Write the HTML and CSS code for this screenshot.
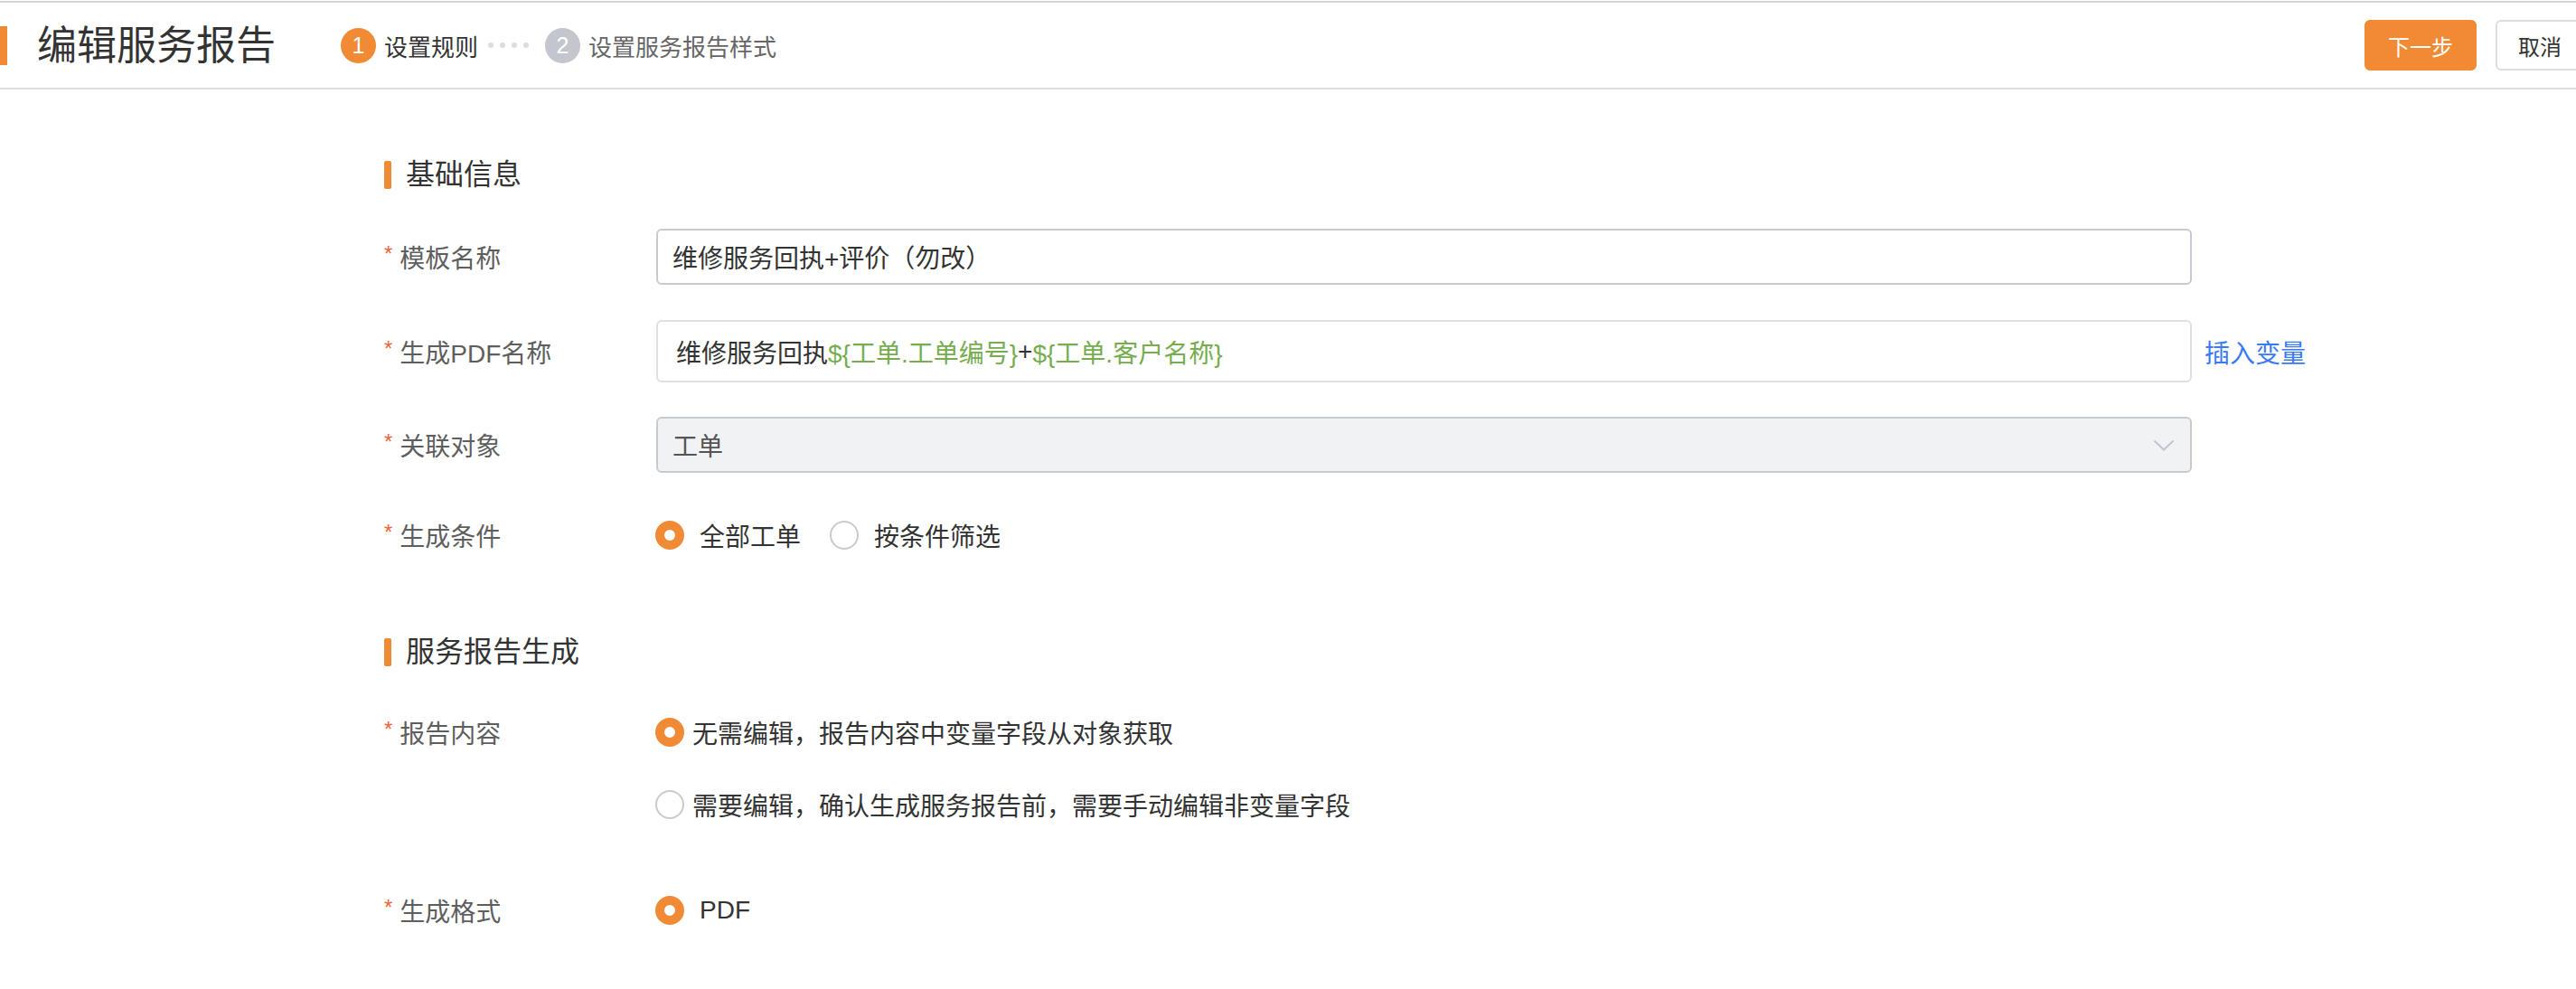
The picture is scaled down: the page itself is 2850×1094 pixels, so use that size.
FILE: index.html
```html
<!DOCTYPE html>
<html lang="zh-CN">
<head>
    <meta charset="UTF-8">
    <meta name="viewport" content="width=device-width, initial-scale=1.0">
    <title>编辑服务报告</title>
    <link rel="stylesheet" href="styles.css">
</head>
<body>
    <header class="topbar">
        <div class="topbar-left">
            <h1 class="page-title">编辑服务报告</h1>
            <ol class="steps">
                <li class="step active"><span class="step-num">1</span><span class="step-text">设置规则</span></li>
                <li class="step-dots"><i></i><i></i><i></i><i></i></li>
                <li class="step"><span class="step-num">2</span><span class="step-text">设置服务报告样式</span></li>
            </ol>
        </div>
        <div class="topbar-actions">
            <button class="btn btn-primary">下一步</button>
            <button class="btn btn-cancel">取消</button>
        </div>
    </header>

    <main class="form">
        <h2 class="section-title">基础信息</h2>

        <div class="form-item">
            <label class="form-label"><span class="required">*</span>模板名称</label>
            <div class="form-control">
                <input class="input" type="text" value="维修服务回执+评价（勿改）">
            </div>
        </div>

        <div class="form-item">
            <label class="form-label"><span class="required">*</span>生成PDF名称</label>
            <div class="form-control">
                <div class="input rich-input">维修服务回执<span class="var">${工单.工单编号}</span>+<span class="var">${工单.客户名称}</span></div>
                <a class="link" href="#">插入变量</a>
            </div>
        </div>

        <div class="form-item">
            <label class="form-label"><span class="required">*</span>关联对象</label>
            <div class="form-control">
                <div class="input select is-disabled">
                    <span>工单</span>
                    <svg class="chevron" width="24" height="13" viewBox="0 0 24 13"><path d="M1.5 1.5 L12 11.5 L22.5 1.5" fill="none" stroke="#c3c5cd" stroke-width="2"/></svg>
                </div>
            </div>
        </div>

        <div class="form-item">
            <label class="form-label"><span class="required">*</span>生成条件</label>
            <div class="form-control radio-group">
                <span class="radio-item"><span class="radio checked"></span>全部工单</span>
                <span class="radio-item"><span class="radio"></span>按条件筛选</span>
            </div>
        </div>

        <h2 class="section-title section-second">服务报告生成</h2>

        <div class="form-item form-item-list">
            <label class="form-label"><span class="required">*</span>报告内容</label>
            <div class="radio-list">
                <span class="radio-item"><span class="radio checked"></span>无需编辑，报告内容中变量字段从对象获取</span>
                <span class="radio-item"><span class="radio"></span>需要编辑，确认生成服务报告前，需要手动编辑非变量字段</span>
            </div>
        </div>

        <div class="form-item">
            <label class="form-label"><span class="required">*</span>生成格式</label>
            <div class="form-control radio-group">
                <span class="radio-item"><span class="radio checked"></span>PDF</span>
            </div>
        </div>
    </main>
</body>
</html>
```

FILE: styles.css
```css
body {
    margin: 0;
    background: #fff;
    color: #333;
    font-family: "Liberation Sans", "Noto Sans CJK SC", sans-serif;
    overflow: hidden;
}

/* top bar */
.topbar {
    display: flex;
    justify-content: space-between;
    align-items: center;
    height: 94px;
    margin-top: 1px;
    border-top: 2px solid #d4d4d6;
    border-bottom: 2px solid #dcdde2;
}

.topbar-left {
    display: flex;
    align-items: center;
}

.page-title {
    margin: 0;
    padding-left: 33px;
    border-left: 8px solid #f08a34;
    font-size: 44px;
    font-weight: normal;
    line-height: 43px;
    color: #333;
}

.steps {
    display: flex;
    align-items: center;
    list-style: none;
    margin: 0 0 0 72px;
    padding: 0;
}

.step {
    display: flex;
    align-items: center;
    font-size: 26px;
    color: #666;
}

.step.active {
    color: #333;
}

.step-num {
    width: 39px;
    height: 39px;
    border-radius: 50%;
    background: #c4c6ce;
    color: #fff;
    font-size: 25px;
    line-height: 39px;
    text-align: center;
    margin-right: 9px;
}

.step.active .step-num {
    background: #f08a34;
}

.step-dots {
    display: flex;
    gap: 7px;
    margin: 0 18px 0 11px;
}

.step-dots i {
    width: 6px;
    height: 6px;
    border-radius: 50%;
    background: #dcdde2;
}

.topbar-actions {
    display: flex;
    gap: 21px;
    margin-right: -9px;
}

.btn {
    flex-shrink: 0;
    box-sizing: border-box;
    height: 56px;
    padding: 0;
    font-family: inherit;
    font-size: 24px;
    white-space: nowrap;
    text-align: center;
    border-radius: 6px;
    border: 2px solid #dcdde2;
    background: #fff;
    color: #333;
    cursor: pointer;
}

.btn-primary {
    width: 124px;
    background: #f08a34;
    border-color: #f08a34;
    color: #fff;
}

.btn-cancel {
    width: 98px;
}

/* form */
.form {
    width: 2000px;
    margin: 0 auto;
    padding-top: 78px;
}

.section-title {
    display: flex;
    align-items: center;
    margin: 0 0 44px;
    font-size: 32px;
    font-weight: normal;
    line-height: 32px;
    color: #333;
}

.section-title::before {
    content: "";
    width: 8px;
    height: 31px;
    border-radius: 2px;
    background: #f08a34;
    margin-right: 16px;
}

.section-second {
    margin-top: 82px;
    margin-bottom: 42px;
}

.form-item {
    display: flex;
    margin-bottom: 38px;
    font-size: 28px;
}

.form-item:first-of-type {
    margin-bottom: 39px;
}

.form-label {
    flex: 0 0 301px;
    display: flex;
    align-items: center;
    height: 62px;
    color: #5e5e5e;
}

.form-item:nth-of-type(2) .form-label {
    height: 69px;
}

.required {
    align-self: center;
    margin: -6px 8px 0 0;
    font-size: 24px;
    color: #f0643c;
}

.form-control {
    flex: 1;
    display: flex;
    align-items: center;
    min-height: 62px;
}

.input {
    box-sizing: border-box;
    flex: 0 0 100%;
    height: 62px;
    padding: 0 16px;
    border: 2px solid #c8cad2;
    border-radius: 6px;
    background: #fff;
    font-family: inherit;
    font-size: 28px;
    color: #333;
    outline: none;
}

.rich-input {
    display: flex;
    align-items: center;
    height: 69px;
    padding-left: 20px;
    border-color: #dfe0e3;
}

.var {
    color: #76ad4f;
}

.link {
    margin-left: 14px;
    color: #3b7af5;
    text-decoration: none;
    white-space: nowrap;
}

.select {
    display: flex;
    align-items: center;
    justify-content: space-between;
    padding-right: 17px;
}

.select.is-disabled {
    background: #f1f2f4;
    color: #555;
}

.radio-group {
    gap: 33px;
}

.radio-item {
    display: flex;
    align-items: center;
    color: #333;
}

.radio {
    box-sizing: border-box;
    width: 32px;
    height: 32px;
    border-radius: 50%;
    border: 2px solid #c8cad2;
    margin: 0 17px 0 -1px;
}

.radio.checked {
    border: 10px solid #f08a34;
}

.form-item-list {
    margin-bottom: 55px;
}

.radio-list {
    display: flex;
    flex-direction: column;
    gap: 18px;
}

.radio-list .radio-item {
    height: 62px;
}

.radio-list .radio {
    margin-right: 9px;
}
```
